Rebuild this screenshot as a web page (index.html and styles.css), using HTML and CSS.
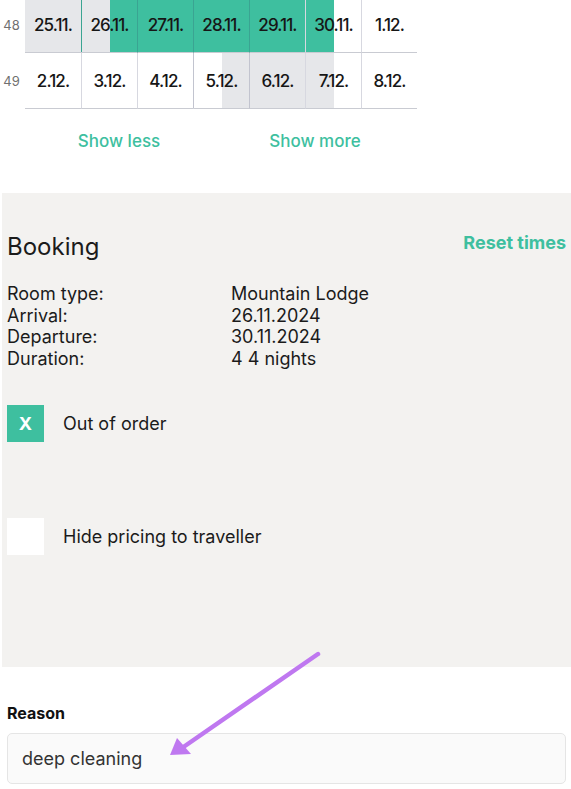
FILE: index.html
```html
<!DOCTYPE html>
<html lang="en">
<head>
<meta charset="utf-8">
<title>Booking</title>
<link rel="stylesheet" href="styles.css">
</head>
<body>
<div class="page">
  <div class="calendar">
    <div class="week">
      <div class="wk">48</div>
      <div class="day gray">25.11.</div>
      <div class="day gray-green">26.11.</div>
      <div class="day green">27.11.</div>
      <div class="day green">28.11.</div>
      <div class="day green">29.11.</div>
      <div class="day green-white">30.11.</div>
      <div class="day">1.12.</div>
    </div>
    <div class="week">
      <div class="wk">49</div>
      <div class="day">2.12.</div>
      <div class="day">3.12.</div>
      <div class="day">4.12.</div>
      <div class="day white-gray">5.12.</div>
      <div class="day gray">6.12.</div>
      <div class="day gray-white">7.12.</div>
      <div class="day">8.12.</div>
    </div>
  </div>

  <div class="more">
    <a class="more-link">Show less</a>
    <a class="more-link">Show more</a>
  </div>

  <section class="panel">
    <div class="panel-head">
      <h2 class="panel-title">Booking</h2>
      <a class="reset">Reset times</a>
    </div>
    <dl class="info">
      <dt>Room type:</dt><dd>Mountain Lodge</dd>
      <dt>Arrival:</dt><dd>26.11.2024</dd>
      <dt>Departure:</dt><dd>30.11.2024</dd>
      <dt>Duration:</dt><dd>4 4 nights</dd>
    </dl>
    <label class="check check-first">
      <span class="box box-on">X</span>
      <span class="check-label">Out of order</span>
    </label>
    <label class="check check-second">
      <span class="box"></span>
      <span class="check-label">Hide pricing to traveller</span>
    </label>
  </section>

  <div class="reason">
    <div class="reason-label">Reason</div>
    <div class="reason-input">deep cleaning</div>
  </div>

  <svg class="arrow" width="571" height="789" viewBox="0 0 571 789">
    <line x1="318" y1="657" x2="182" y2="751" stroke="#bf78f0" stroke-width="4.5" stroke-linecap="round"/>
    <polygon points="170,758 177,741 191,757" fill="#bf78f0"/>
  </svg>
</div>
</body>
</html>
```
FILE: styles.css
```css
* { box-sizing: border-box; }
html, body { margin: 0; padding: 0; background: #ffffff; }
body {
  font-family: Inter, "Noto Sans", "DejaVu Sans", sans-serif;
  color: #1b1b1b;
  width: 571px;
  height: 789px;
  overflow: hidden;
}
.page { position: relative; width: 571px; height: 789px; }

.calendar { margin-top: -3px; }
.week { display: flex; height: 56px; }
.wk {
  width: 25px;
  display: flex;
  align-items: center;
  justify-content: center;
  padding-right: 2px;
  font-size: 13px;
  color: #707070;
}
.day {
  width: 56px;
  height: 56px;
  border-bottom: 1px solid #c9cbd2;
  display: flex;
  align-items: center;
  justify-content: center;
  font-size: 17px;
  font-weight: 500;
  letter-spacing: -0.9px;
  color: #161616;
}
.day + .day { border-left: 1px solid rgba(40, 50, 90, 0.19); }
.gray { background: #e6e7ea; }
.green { background: #3ebf9f; }
.gray-green { background: linear-gradient(to right, #e6e7ea 50%, #3ebf9f 50%); }
.green-white { background: linear-gradient(to right, #3ebf9f 50%, #ffffff 50%); }
.white-gray { background: linear-gradient(to right, #ffffff 50%, #e6e7ea 50%); }
.gray-white { background: linear-gradient(to right, #e6e7ea 50%, #ffffff 50%); }

.more {
  display: flex;
  width: 413px;
  padding-left: 21px;
  margin-top: 20px;
}
.more-link {
  flex: 1;
  text-align: center;
  font-size: 17px;
  font-weight: 500;
  color: #3ebf9f;
  line-height: 24px;
}

.panel {
  margin: 40px 0 0 2px;
  height: 474px;
  background: #f3f2f0;
  padding: 38px 5px 0 5px;
}
.panel-head {
  display: flex;
  justify-content: space-between;
  align-items: flex-start;
}
.panel-title {
  margin: 0;
  font-size: 24px;
  font-weight: 400;
  line-height: 32px;
}
.reset {
  font-size: 18px;
  font-weight: 700;
  color: #3ebf9f;
  line-height: 24px;
}
.info {
  display: grid;
  grid-template-columns: 224px 1fr;
  margin: 20px 0 0 0;
  font-size: 18px;
  line-height: 21.7px;
}
.info dt, .info dd { margin: 0; }

.check {
  display: flex;
  align-items: center;
  gap: 19px;
}
.check-first { margin-top: 35px; }
.check-second { margin-top: 76px; }
.box {
  width: 37px;
  height: 37px;
  background: #ffffff;
  display: flex;
  align-items: center;
  justify-content: center;
  font-size: 18px;
  font-weight: 700;
  color: #ffffff;
}
.box-on { background: #3ebf9f; }
.check-label { font-size: 18px; }

.reason { padding: 36px 5px 0 7px; }
.reason-label {
  font-size: 16px;
  font-weight: 700;
  color: #111111;
  line-height: 20px;
}
.reason-input {
  margin-top: 10px;
  height: 51px;
  background: #fafafa;
  border: 1px solid #e5e5e5;
  border-radius: 5px;
  padding-left: 14px;
  display: flex;
  align-items: center;
  font-size: 18px;
  color: #333333;
}

.arrow {
  position: absolute;
  left: 0;
  top: 0;
  pointer-events: none;
}
```
